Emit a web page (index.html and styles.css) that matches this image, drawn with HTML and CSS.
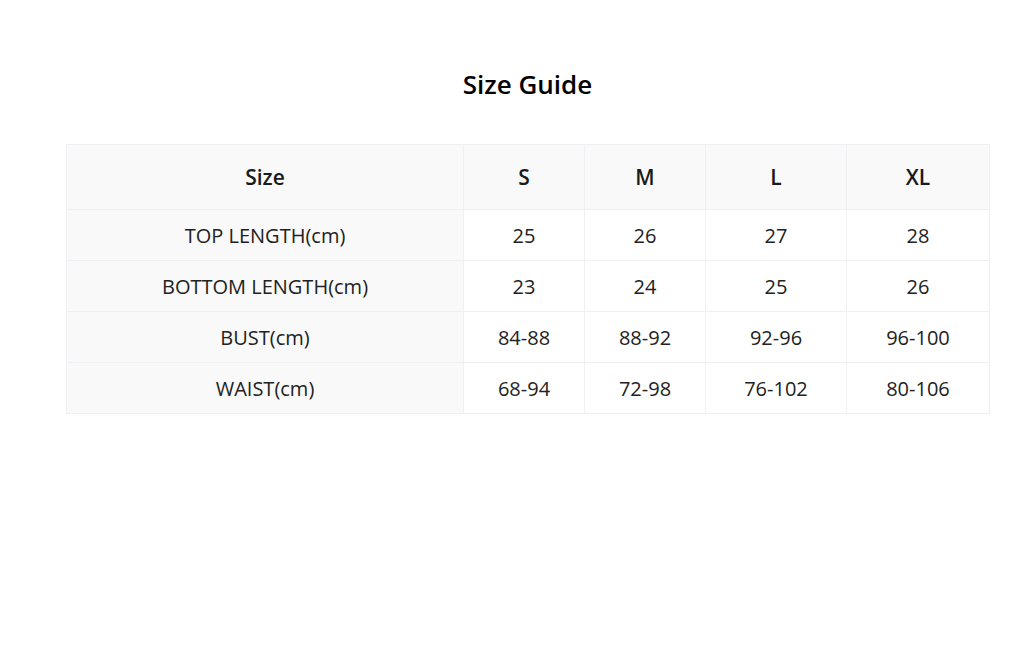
FILE: index.html
```html
<!DOCTYPE html>
<html lang="en">
<head>
<meta charset="utf-8">
<title>Size Guide</title>
<link rel="stylesheet" href="styles.css">
</head>
<body>
<main class="page">
  <h1 class="title">Size Guide</h1>
  <table class="size-table">
    <colgroup>
      <col class="c-label"><col class="c-s"><col class="c-m"><col class="c-l"><col class="c-xl">
    </colgroup>
    <thead>
      <tr><th>Size</th><th>S</th><th>M</th><th>L</th><th>XL</th></tr>
    </thead>
    <tbody>
      <tr><td class="label">TOP LENGTH(cm)</td><td>25</td><td>26</td><td>27</td><td>28</td></tr>
      <tr><td class="label">BOTTOM LENGTH(cm)</td><td>23</td><td>24</td><td>25</td><td>26</td></tr>
      <tr><td class="label">BUST(cm)</td><td>84-88</td><td>88-92</td><td>92-96</td><td>96-100</td></tr>
      <tr><td class="label">WAIST(cm)</td><td>68-94</td><td>72-98</td><td>76-102</td><td>80-106</td></tr>
    </tbody>
  </table>
</main>
</body>
</html>
```

FILE: styles.css
```css
html, body {
  margin: 0;
  padding: 0;
  background: #ffffff;
}
body {
  font-family: "Open Sans", "Liberation Sans", sans-serif;
  color: #222;
}
.page {
  padding: 64px 35px 0 66px;
}
.title {
  margin: 0 0 40px;
  text-align: center;
  font-size: 26px;
  font-weight: 600;
  line-height: 40px;
  color: #000;
}
.size-table {
  width: 923px;
  border-collapse: collapse;
  table-layout: fixed;
}
.c-label { width: 397px; }
.c-s { width: 121px; }
.c-m { width: 121px; }
.c-l { width: 141px; }
.c-xl { width: 143px; }
.size-table th,
.size-table td {
  border: 1px solid #eff0f4;
  text-align: center;
  padding: 0;
}
.size-table th {
  height: 64px;
  background: #f9f9f9;
  font-size: 21px;
  font-weight: 600;
  color: #1a1a1a;
}
.size-table td {
  height: 50px;
  font-size: 20px;
  font-weight: 400;
  color: #222;
}
.size-table td.label {
  background: #f9f9f9;
}
```
